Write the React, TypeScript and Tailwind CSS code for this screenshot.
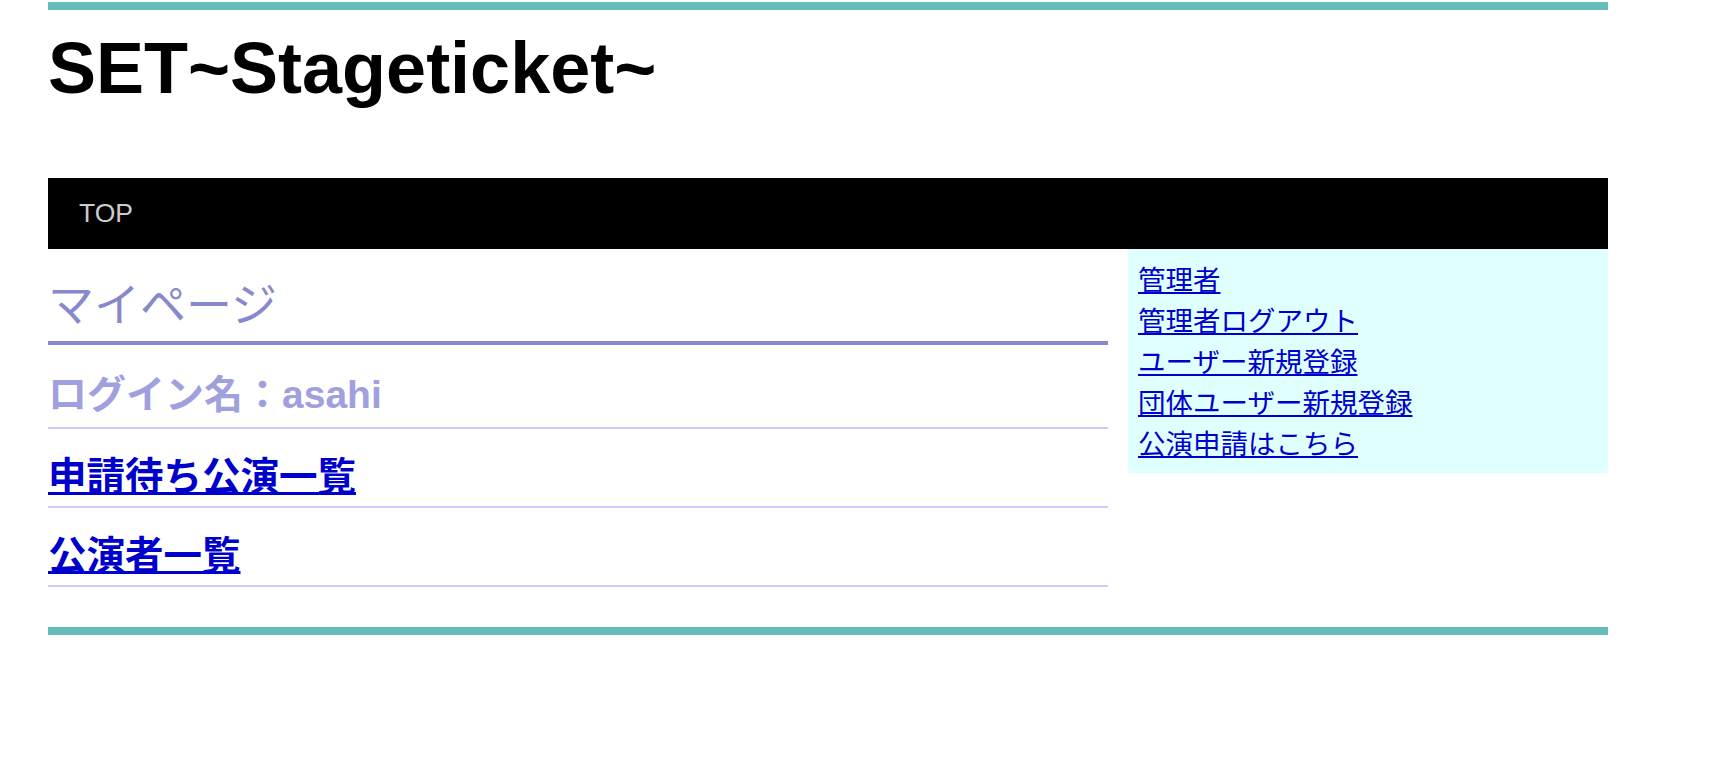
import React from "react";

const sans = "font-['Liberation_Sans','Noto_Sans_CJK_JP',sans-serif]";
const jp = "font-['Noto_Sans_CJK_JP',sans-serif]";

export default function App() {
  const side = [
    "管理者",
    "管理者ログアウト",
    "ユーザー新規登録",
    "団体ユーザー新規登録",
    "公演申請はこちら",
  ];
  return (
    <div className={`min-h-[776px] bg-white ${sans}`}>
      <div className="ml-[48px] w-[1560px] pt-[2px]">
        <div className="h-[8px] bg-[#66bbbb]" />
        <h1 className="mt-[22px] text-[72px] leading-[72px] font-bold text-black">
          SET~Stageticket~
        </h1>
        <nav className="mt-[74px] flex h-[71px] items-center bg-black pl-[31px]">
          <a className="text-[26.5px] leading-none text-[#cccccc]">TOP</a>
        </nav>
        <div className="flex gap-[20px]">
          <div className="flex-1">
            <h2
              className={`${jp} mt-[29px] border-b-[4px] border-[#8888cc] pb-[17px] text-[46px] leading-[46px] font-normal text-[#8888cc]`}
            >
              マイページ
            </h2>
            <div className="h-[84px] border-b-[2px] border-[#ccccff] pt-[30px]">
              <h3 className="text-[39px] leading-[39px] font-bold text-[#a0a0de]">
                ログイン名：asahi
              </h3>
            </div>
            <div className="h-[79px] border-b-[2px] border-[#ccccff] pt-[25px]">
              <a
                className={`${jp} text-[38.5px] leading-[38px] font-bold text-[#0000cc] underline`}
                href="#"
              >
                申請待ち公演一覧
              </a>
            </div>
            <div className="h-[79px] border-b-[2px] border-[#ccccff] pt-[25px]">
              <a
                className={`${jp} text-[38.5px] leading-[38px] font-bold text-[#0000cc] underline`}
                href="#"
              >
                公演者一覧
              </a>
            </div>
          </div>
          <div className="w-[480px]">
            <ul className={`${jp} h-[224px] bg-[#e0ffff] pl-[10px] pt-[9px]`}>
              {side.map((s) => (
                <li key={s} className="h-[41px] text-[27.5px] leading-[41px]">
                  <a className="text-[#0000cc] underline" href="#">
                    {s}
                  </a>
                </li>
              ))}
            </ul>
          </div>
        </div>
        <div className="mt-[40px] h-[8px] bg-[#66bbbb]" />
      </div>
    </div>
  );
}
